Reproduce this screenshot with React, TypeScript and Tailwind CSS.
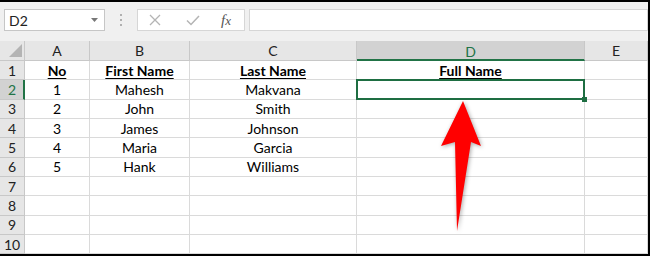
import React from "react";

const cols = ["A", "B", "C", "D", "E"];
const rows: string[][] = [
  ["No", "First Name", "Last Name", "Full Name", ""],
  ["1", "Mahesh", "Makvana", "", ""],
  ["2", "John", "Smith", "", ""],
  ["3", "James", "Johnson", "", ""],
  ["4", "Maria", "Garcia", "", ""],
  ["5", "Hank", "Williams", "", ""],
  ["", "", "", "", ""],
  ["", "", "", "", ""],
  ["", "", "", "", ""],
  ["", "", "", "", ""],
];

function Toolbar() {
  return (
    <div className="flex h-[39px] items-start bg-[#f0f0f0] pt-[7px]">
      <div className="ml-[4px] flex h-[22px] w-[101px] items-center justify-between border border-[#c6c6c6] bg-white pl-[4px] pr-[6px] text-[14px] text-[#222]">
        <span>D2</span>
        <svg width="7" height="4" viewBox="0 0 7 4">
          <path d="M0 0h7L3.5 4z" fill="#777" />
        </svg>
      </div>
      <div className="ml-[13px] flex h-[22px] w-[6px] flex-col items-center justify-center gap-[3px]">
        <span className="h-[2px] w-[2px] bg-[#b0b0b0]" />
        <span className="h-[2px] w-[2px] bg-[#b0b0b0]" />
        <span className="h-[2px] w-[2px] bg-[#b0b0b0]" />
      </div>
      <div className="ml-[13px] flex h-[22px] w-[108px] items-center border border-[#d6d6d6] bg-white">
        <svg className="ml-[11px]" width="12" height="12" viewBox="0 0 12 12">
          <path d="M1 1l10 10M11 1L1 11" stroke="#b4b4b4" strokeWidth="1.3" />
        </svg>
        <svg className="ml-[25px]" width="14" height="11" viewBox="0 0 14 11">
          <path d="M1 5.5l4 4L13 1" stroke="#b4b4b4" strokeWidth="1.5" fill="none" />
        </svg>
        <span className="ml-[21px] font-['Liberation_Serif',serif] text-[15px] italic leading-none text-[#555]">
          f<span className="text-[13px]">x</span>
        </span>
      </div>
      <div className="ml-[4px] h-[22px] flex-1 border border-[#d6d6d6] bg-white" />
    </div>
  );
}

function Arrow() {
  return (
    <svg
      className="pointer-events-none absolute left-0 top-0 drop-shadow-[1px_1px_2px_rgba(0,0,0,0.35)]"
      width="648"
      height="254"
      viewBox="0 0 648 254"
    >
      <polygon points="463,101 481,146 471,142 457,231 455,142 441,146" fill="#ff0000" />
    </svg>
  );
}

export default function App() {
  return (
    <div className="h-[256px] w-[650px] overflow-hidden border-y-2 border-r-2 border-black bg-white font-['Lato',sans-serif]">
      <Toolbar />
      <div className="relative h-[213px] overflow-hidden">
        <div className="grid grid-cols-[25px_65px_100px_167px_228px_63px] grid-rows-[20px_repeat(10,19.33px)] text-[14px] text-black">
          <div className="relative border-b border-r border-[#c8c8c8] bg-[#e6e6e6]">
            <svg className="absolute bottom-[3px] right-[2px]" width="13" height="13" viewBox="0 0 13 13">
              <path d="M13 0v13H0z" fill="#b4b4b4" />
            </svg>
          </div>
          {cols.map((c) =>
            c === "D" ? (
              <div
                key={c}
                className="flex items-center justify-center border-b-2 border-r border-b-[#217346] border-r-[#c8c8c8] bg-[#d2d2d2] pt-[2px] text-[#217346]"
              >
                {c}
              </div>
            ) : (
              <div key={c} className="flex items-center justify-center border-b border-r border-[#c8c8c8] bg-[#e6e6e6] text-[#222]">
                {c}
              </div>
            )
          )}
          {rows.map((r, i) => (
            <React.Fragment key={i}>
              {i === 1 ? (
                <div className="flex items-center justify-center border-b border-r-2 border-b-[#c8c8c8] border-r-[#217346] bg-[#d2d2d2] pl-[1px] text-[#217346]">
                  {i + 1}
                </div>
              ) : (
                <div className="flex items-center justify-center border-b border-r border-[#c8c8c8] bg-[#e6e6e6] text-[#222]">
                  {i + 1}
                </div>
              )}
              {r.map((v, j) => (
                <div
                  key={j}
                  className={`relative flex items-center justify-center border-b border-r border-[#dadada] ${
                    i === 0 ? "font-bold underline decoration-1 underline-offset-2" : ""
                  } ${i === 1 && j === 3 ? "z-10" : ""}`}
                >
                  {v}
                  {i === 1 && j === 3 && (
                    <>
                      <div className="absolute -left-px -top-px bottom-[-1px] right-[-1px] border-2 border-[#1e6e42]" />
                      <div className="absolute bottom-[-3px] right-[-3px] h-[5px] w-[5px] bg-[#1e6e42]" />
                    </>
                  )}
                </div>
              ))}
            </React.Fragment>
          ))}
        </div>
        <div className="absolute left-0 top-[-41px] z-20">
          <Arrow />
        </div>
      </div>
    </div>
  );
}
